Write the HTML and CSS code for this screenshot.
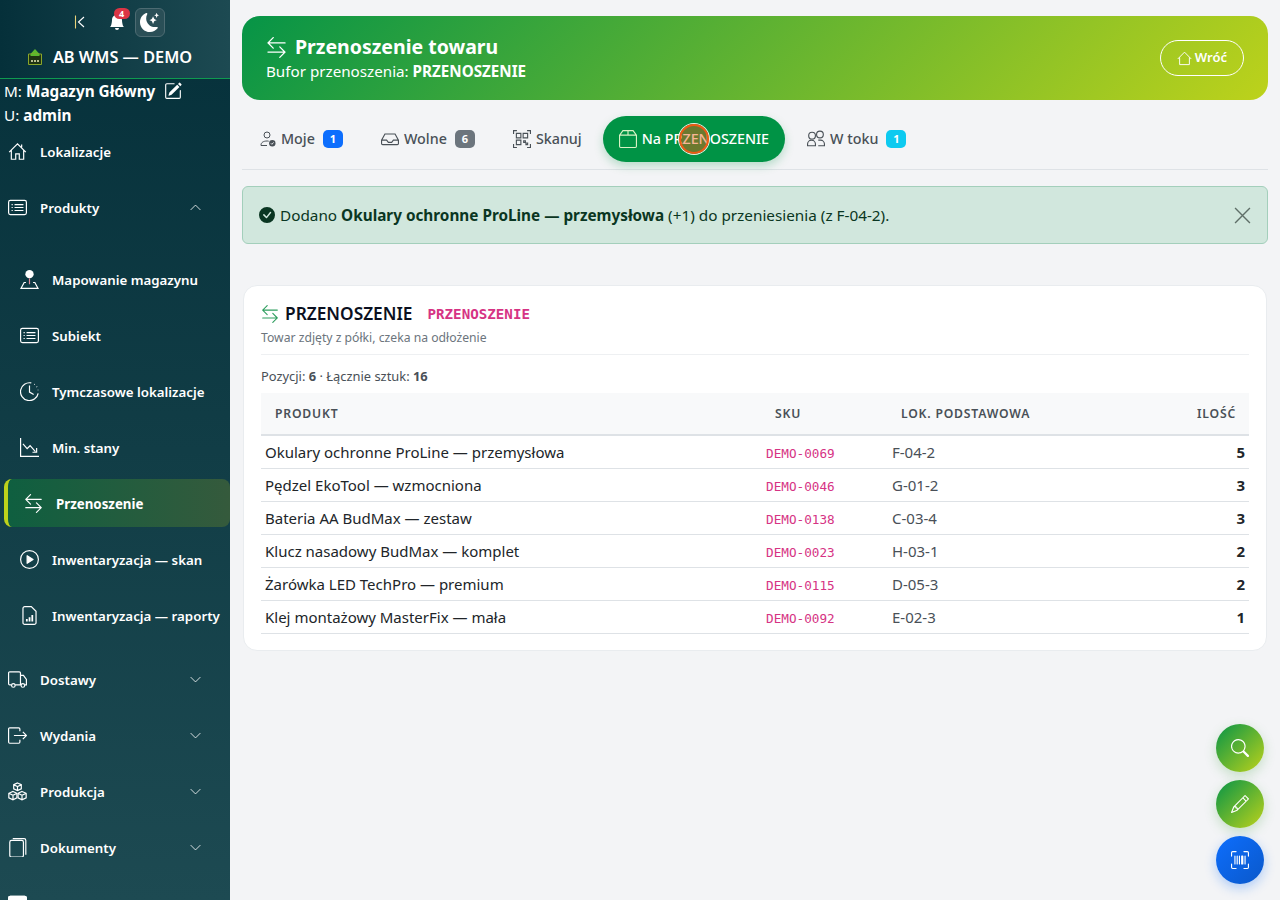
FILE: index.html
```html
<!DOCTYPE html>
<html lang="pl">
	<head>
		<meta charset="UTF-8" />
		<meta name="viewport" content="width=device-width, initial-scale=1.0" />
		<title>Przenoszenie towaru</title>
		<link rel="stylesheet" href="styles.css">
	</head>
	<body>
		<aside class="sidebar">
			<div class="brand">
				<div class="brand-tools">
					<svg class="tool-collapse" viewBox="0 0 16 16" fill="none" stroke="currentColor" stroke-width="1.1"><path d="M3.5 1.5v13" stroke="#e8d27a"/><path d="M12 3 6.5 8l5.5 5"/></svg>
					<span class="tool-bell">
						<svg viewBox="0 0 16 16" fill="currentColor"><path d="M8 16a2 2 0 0 0 2-2H6a2 2 0 0 0 2 2zm.995-14.901a1 1 0 1 0-1.99 0A5.002 5.002 0 0 0 3 6c0 1.098-.5 6-2 7h14c-1.5-1-2-5.902-2-7 0-2.42-1.72-4.44-4.005-4.901z"/></svg>
						<b class="bell-count">4</b>
					</span>
					<span class="tool-theme">
						<svg viewBox="0 0 16 16" fill="currentColor"><path d="M6 .278a.768.768 0 0 1 .08.858 7.208 7.208 0 0 0-.878 3.46c0 4.021 3.278 7.277 7.318 7.277.527 0 1.04-.055 1.533-.16a.787.787 0 0 1 .81.316.733.733 0 0 1-.031.893A8.349 8.349 0 0 1 8.344 16C3.734 16 0 12.286 0 7.71 0 4.266 2.114 1.312 5.124.06A.752.752 0 0 1 6 .278z"/><path d="M10.794 3.148a.217.217 0 0 1 .412 0l.387 1.162c.173.518.579.924 1.097 1.097l1.162.387a.217.217 0 0 1 0 .412l-1.162.387a1.734 1.734 0 0 0-1.097 1.097l-.387 1.162a.217.217 0 0 1-.412 0l-.387-1.162A1.734 1.734 0 0 0 9.31 6.593l-1.162-.387a.217.217 0 0 1 0-.412l1.162-.387a1.734 1.734 0 0 0 1.097-1.097l.387-1.162zM13.863.099a.145.145 0 0 1 .274 0l.258.774c.115.346.386.617.732.732l.774.258a.145.145 0 0 1 0 .274l-.774.258a1.156 1.156 0 0 0-.732.732l-.258.774a.145.145 0 0 1-.274 0l-.258-.774a1.156 1.156 0 0 0-.732-.732l-.774-.258a.145.145 0 0 1 0-.274l.774-.258c.346-.115.617-.386.732-.732L13.863.1z"/></svg>
					</span>
				</div>
				<div class="brand-name">
					<svg class="brand-logo" viewBox="0 0 16 16"><path d="M8 0 3.500 5h9z" fill="#5cb82e"/><path d="M1.500 5h13v10.500h-13z" fill="#1f3313" stroke="#8aa62a"/><path d="M3.500 5h9v2h-9z" fill="#5cb82e"/><path d="M4 11h2v2H4zM7 11h2v2H7zM10 11h2v2h-2z" fill="#b8bd90"/></svg>
					<span>AB WMS — DEMO</span>
				</div>
			</div>
			<div class="user-info">
				<div>M: <b>Magazyn Główny</b> <svg class="edit-icon" viewBox="0 0 16 16" fill="currentColor"><path d="M15.502 1.94a.5.5 0 0 1 0 .706L14.459 3.69l-2-2L13.502.646a.5.5 0 0 1 .707 0l1.293 1.293zm-1.75 2.456-2-2L4.939 9.21a.5.5 0 0 0-.121.196l-.805 2.414a.25.25 0 0 0 .316.316l2.414-.805a.5.5 0 0 0 .196-.12l6.813-6.814z"/><path fill-rule="evenodd" d="M1 13.500A1.500 1.500 0 0 0 2.500 15h11a1.500 1.500 0 0 0 1.500-1.500v-6a.5.5 0 0 0-1 0v6a.5.5 0 0 1-.5.5h-11a.5.5 0 0 1-.5-.5v-11a.5.5 0 0 1 .5-.5H9a.5.5 0 0 0 0-1H2.500A1.500 1.500 0 0 0 1 2.500v11z"/></svg></div>
				<div>U: <b>admin</b></div>
			</div>
			<nav class="nav">
				<a class="nav-item">
					<svg viewBox="0 0 16 16" fill="none" stroke="currentColor"><path d="M1 8.500 8 1.500l7 7M2.800 7v7.500h3.700V10h3v4.500h3.700V7M11.500 2v2.500"/></svg>
					<span>Lokalizacje</span>
				</a>
				<a class="nav-item">
					<svg viewBox="0 0 16 16" fill="none" stroke="currentColor"><rect x=".5" y="2" width="15" height="12" rx="1.500"/><path d="M5.500 5.500h7.500M5.500 8h7.500M5.500 10.500h7.500M3 5.500h1M3 8h1M3 10.500h1"/></svg>
					<span>Produkty</span>
					<svg class="chev" viewBox="0 0 16 16" fill="none" stroke="currentColor"><path d="m2 11 6-6 6 6"/></svg>
				</a>
				<div class="subnav">
					<a class="nav-item">
						<svg viewBox="0 0 16 16" fill="none" stroke="currentColor"><circle cx="8" cy="3.500" r="3.500" fill="currentColor" stroke="none"/><path d="M8 7v5" stroke="#e08a9a"/><path d="M5 10.500H3.500L.8 15.500h14.400l-2.700-5H11"/></svg>
						<span>Mapowanie magazynu</span>
					</a>
					<a class="nav-item">
						<svg viewBox="0 0 16 16" fill="none" stroke="currentColor"><rect x=".5" y="2" width="15" height="12" rx="1.500"/><path d="M5.500 5.500h7.500M5.500 8h7.500M5.500 10.500h7.500M3 5.500h1M3 8h1M3 10.500h1"/></svg>
						<span>Subiekt</span>
					</a>
					<a class="nav-item">
						<svg viewBox="0 0 16 16" fill="none" stroke="currentColor"><path d="M9.500.8A7.500 7.500 0 1 0 15.300 9.500"/><path d="M8 3v5.500l3.500 2"/><path d="M12 1.800l.5.300M14 3.800l.3.500M15.200 6.500v.5" stroke-dasharray="1 1"/></svg>
						<span>Tymczasowe lokalizacje</span>
					</a>
					<a class="nav-item">
						<svg viewBox="0 0 16 16" fill="none" stroke="currentColor"><path d="M.5 0v15.500H16"/><path d="m2.500 5 3.500 4 2.500-2.500 4.500 5"/><path d="M14 8.500v3.500h-3.500"/></svg>
						<span>Min. stany</span>
					</a>
					<a class="nav-item active">
						<svg viewBox="0 0 16 16" fill="currentColor"><use href="#swap"/></svg>
						<span>Przenoszenie</span>
					</a>
					<a class="nav-item">
						<svg viewBox="0 0 16 16" fill="none" stroke="currentColor"><circle cx="8" cy="8" r="7.500"/><path d="M6 4.800v6.400L11 8z" fill="currentColor" stroke-linejoin="round"/></svg>
						<span>Inwentaryzacja — skan</span>
					</a>
					<a class="nav-item">
						<svg viewBox="0 0 16 16" fill="none" stroke="currentColor"><path d="M9.500.5H4A1.500 1.500 0 0 0 2.500 2v12A1.500 1.500 0 0 0 4 15.500h8a1.500 1.500 0 0 0 1.500-1.500V4.500z"/><path d="M5 13v-2h1.500v2zM7.300 13V9.500h1.500V13zM9.600 13V7.500h1.500V13z" fill="currentColor" stroke="none"/></svg>
						<span>Inwentaryzacja — raporty</span>
					</a>
				</div>
				<a class="nav-item">
					<svg viewBox="0 0 16 16" fill="none" stroke="currentColor"><path d="M3 12.500H1.500a1 1 0 0 1-1-1v-9a1 1 0 0 1 1-1h8a1 1 0 0 1 1 1v10H6M10.500 4.500h2.500l2.500 3.500v4.500H14M10.500 12.500h.5"/><circle cx="4.500" cy="13" r="1.500"/><circle cx="12.500" cy="13" r="1.500"/></svg>
					<span>Dostawy</span>
					<svg class="chev" viewBox="0 0 16 16" fill="none" stroke="currentColor"><path d="m2 5 6 6 6-6"/></svg>
				</a>
				<a class="nav-item">
					<svg viewBox="0 0 16 16" fill="none" stroke="currentColor"><path d="M10 11.500v2a1 1 0 0 1-1 1H1.500a1 1 0 0 1-1-1v-11a1 1 0 0 1 1-1H9a1 1 0 0 1 1 1v2M5 8h10.500M12.500 5l3 3-3 3"/></svg>
					<span>Wydania</span>
					<svg class="chev" viewBox="0 0 16 16" fill="none" stroke="currentColor"><path d="m2 5 6 6 6-6"/></svg>
				</a>
				<a class="nav-item">
					<svg viewBox="0 0 16 16" fill="none" stroke="currentColor"><path d="M8 .8 11.200 2.300v3.400L8 7.200 4.800 5.700V2.300zM4.800 2.300 8 3.800l3.200-1.500M8 3.800v3.400"/><path d="M4.200 8 7.500 9.500v3.800L4.200 15 .7 13.300V9.500zM.7 9.500l3.500 1.700 3.300-1.700M4.200 11.200V15"/><path d="M11.800 8l3.500 1.500v3.800L11.800 15l-3.300-1.700V9.500zM8.500 9.500l3.300 1.700 3.500-1.700M11.800 11.200V15"/></svg>
					<span>Produkcja</span>
					<svg class="chev" viewBox="0 0 16 16" fill="none" stroke="currentColor"><path d="m2 5 6 6 6-6"/></svg>
				</a>
				<a class="nav-item">
					<svg viewBox="0 0 16 16" fill="none" stroke="currentColor"><rect x="1.500" y="2" width="11.500" height="14" rx="1.500"/><path d="M4 .5h9.500a1.500 1.500 0 0 1 1.500 1.500v12"/></svg>
					<span>Dokumenty</span>
					<svg class="chev" viewBox="0 0 16 16" fill="none" stroke="currentColor"><path d="m2 5 6 6 6-6"/></svg>
				</a>
				<a class="nav-item">
					<svg viewBox="0 0 16 16" fill="none" stroke="currentColor"><rect x=".5" y="2" width="15" height="13.500" rx="1.500"/><path d="M.5 3.500a1.500 1.500 0 0 1 1.500-1.500h12a1.500 1.500 0 0 1 1.500 1.500V5H.5z" fill="currentColor"/></svg>
					<span>Harmonogram</span>
				</a>
			</nav>
		</aside>

		<main class="main">
			<svg class="sprite" xmlns="http://www.w3.org/2000/svg"><symbol id="swap" viewBox="0 0 16 16"><path fill-rule="evenodd" d="M1 11.500a.5.5 0 0 0 .5.5h11.793l-3.147 3.146a.5.5 0 0 0 .708.708l4-4a.5.5 0 0 0 0-.708l-4-4a.5.5 0 0 0-.708.708L13.293 11H1.500a.5.5 0 0 0-.5.5zm14-7a.5.5 0 0 1-.5.5H2.707l3.147 3.146a.5.5 0 1 1-.708.708l-4-4a.5.5 0 0 1 0-.708l4-4a.5.5 0 1 1 .708.708L2.707 4H14.500a.5.5 0 0 1 .5.5z"/></symbol></svg>

			<header class="hero">
				<div class="hero-text">
					<h1><svg viewBox="0 0 16 16" fill="currentColor"><use href="#swap"/></svg>Przenoszenie towaru</h1>
					<p>Bufor przenoszenia: <b>PRZENOSZENIE</b></p>
				</div>
				<a class="btn-back">
					<svg viewBox="0 0 16 16" fill="none" stroke="currentColor"><path d="M.8 8.500 8 1.200l7.200 7.300M2.800 6.800v7.700h10.400V6.800"/></svg>
					Wróć
				</a>
			</header>

			<div class="tabs">
				<a class="tab">
					<svg viewBox="0 0 16 16" fill="none" stroke="currentColor"><circle cx="7" cy="4" r="3"/><path d="M1 14.500v-.5c0-2.500 2.500-4 6-4 .6 0 1.200 0 1.700.2M1 14.500h6"/><circle cx="12.300" cy="12.300" r="3.200" fill="currentColor" stroke="none"/><path d="m10.900 12.300 1 1 1.700-1.900" stroke="#f3f4f6" stroke-width=".9"/></svg>
					Moje <span class="count count-blue">1</span>
				</a>
				<a class="tab">
					<svg class="icon-wide" viewBox="0 0 16 16" fill="none" stroke="currentColor"><path d="M3.500 3.500h9L15.500 9v3a1 1 0 0 1-1 1h-13a1 1 0 0 1-1-1V9zM.5 9h4.500l1.500 2h3L11 9h4.500"/></svg>
					Wolne <span class="count count-grey">6</span>
				</a>
				<a class="tab">
					<svg class="icon-wide" viewBox="0 0 16 16" fill="none" stroke="currentColor"><path d="M.5 3.500v-3h3M12.500.5h3v3M15.500 12.500v3h-3M3.500 15.500h-3v-3"/><path d="M3 3h4v4H3zM9 3h4v4H9zM3 9h4v4H3zM9.500 9.500h1.500v1.500h-1.500zM11.500 11.500h1.500V13h-1.500z"/></svg>
					Skanuj
				</a>
				<a class="tab tab-active">
					<svg class="icon-wide" viewBox="0 0 16 16" fill="none" stroke="#d9f2c4"><path d="M3.500.5h9L15.500 4.500v10a1 1 0 0 1-1 1h-13a1 1 0 0 1-1-1v-10zM.5 4.500h15M8 .5v4"/></svg>
					Na PRZENOSZENIE
					<span class="touch-dot"></span>
				</a>
				<a class="tab">
					<svg class="icon-wide" viewBox="0 0 16 16" fill="none" stroke="currentColor"><circle cx="4.500" cy="5" r="3"/><circle cx="11.500" cy="4" r="3"/><path d="M.5 14v-1.500a3.500 3.500 0 0 1 7 0V14zM10 9h2a3.500 3.500 0 0 1 3.500 3.500V14H10"/></svg>
					W toku <span class="count count-cyan">1</span>
				</a>
			</div>

			<div class="alert">
				<svg class="alert-ok" viewBox="0 0 16 16" fill="currentColor"><path d="M16 8A8 8 0 1 1 0 8a8 8 0 0 1 16 0zm-3.970-3.030a.75.75 0 0 0-1.080.022L7.477 9.417 5.384 7.323a.75.75 0 0 0-1.060 1.060L6.970 11.030a.75.75 0 0 0 1.079-.020l3.992-4.990a.75.75 0 0 0-.010-1.050z"/></svg>
				<span>Dodano <b>Okulary ochronne ProLine — przemysłowa</b> (+1) do przeniesienia (z F-04-2).</span>
				<svg class="alert-close" viewBox="0 0 16 16" fill="none" stroke="currentColor" stroke-width="1.300"><path d="m1 1 14 14M15 1 1 15"/></svg>
			</div>

			<section class="card">
				<div class="card-head">
					<h2><svg viewBox="0 0 16 16" fill="#2f9e5f"><use href="#swap"/></svg>PRZENOSZENIE <code>PRZENOSZENIE</code></h2>
					<p>Towar zdjęty z półki, czeka na odłożenie</p>
				</div>
				<p class="totals">Pozycji: <b>6</b> · Łącznie sztuk: <b>16</b></p>
				<table class="items">
					<thead>
						<tr>
							<th class="col-name">Produkt</th>
							<th class="col-sku">SKU</th>
							<th class="col-loc">Lok. podstawowa</th>
							<th class="col-qty">Ilość</th>
						</tr>
					</thead>
					<tbody>
						<tr><td>Okulary ochronne ProLine — przemysłowa</td><td><code>DEMO-0069</code></td><td class="loc">F-04-2</td><td class="qty">5</td></tr>
						<tr><td>Pędzel EkoTool — wzmocniona</td><td><code>DEMO-0046</code></td><td class="loc">G-01-2</td><td class="qty">3</td></tr>
						<tr><td>Bateria AA BudMax — zestaw</td><td><code>DEMO-0138</code></td><td class="loc">C-03-4</td><td class="qty">3</td></tr>
						<tr><td>Klucz nasadowy BudMax — komplet</td><td><code>DEMO-0023</code></td><td class="loc">H-03-1</td><td class="qty">2</td></tr>
						<tr><td>Żarówka LED TechPro — premium</td><td><code>DEMO-0115</code></td><td class="loc">D-05-3</td><td class="qty">2</td></tr>
						<tr><td>Klej montażowy MasterFix — mała</td><td><code>DEMO-0092</code></td><td class="loc">E-02-3</td><td class="qty">1</td></tr>
					</tbody>
				</table>
			</section>

			<div class="fabs">
				<a class="fab">
					<svg viewBox="0 0 16 16" fill="currentColor"><path d="M11.742 10.344a6.500 6.500 0 1 0-1.397 1.398h-.001c.03.040.062.078.098.115l3.850 3.850a1 1 0 0 0 1.415-1.414l-3.850-3.850a1.007 1.007 0 0 0-.115-.100zM12 6.500a5.500 5.500 0 1 1-11 0 5.500 5.500 0 0 1 11 0z"/></svg>
				</a>
				<a class="fab">
					<svg viewBox="0 0 16 16" fill="currentColor"><path d="M12.146.146a.5.5 0 0 1 .708 0l3 3a.5.5 0 0 1 0 .708l-10 10a.5.5 0 0 1-.168.110l-5 2a.5.5 0 0 1-.650-.650l2-5a.5.5 0 0 1 .110-.168l10-10zM11.207 2.500 13.500 4.793 14.793 3.500 12.500 1.207 11.207 2.500zm1.586 3L10.500 3.207 4 9.707V10h.5a.5.5 0 0 1 .5.5v.5h.5a.5.5 0 0 1 .5.5v.5h.293l6.500-6.500zm-9.761 5.175-.106.106-1.528 3.821 3.821-1.528.106-.106A.5.5 0 0 1 5 12.500V12h-.5a.5.5 0 0 1-.5-.5V11h-.5a.5.5 0 0 1-.468-.325z"/></svg>
				</a>
				<a class="fab fab-blue">
					<svg viewBox="0 0 16 16" fill="currentColor"><path d="M1.500 1a.5.5 0 0 0-.5.5v3a.5.5 0 0 1-1 0v-3A1.500 1.500 0 0 1 1.500 0h3a.5.5 0 0 1 0 1h-3zM11 .5a.5.5 0 0 1 .5-.5h3A1.500 1.500 0 0 1 16 1.500v3a.5.5 0 0 1-1 0v-3a.5.5 0 0 0-.5-.5h-3a.5.5 0 0 1-.5-.5zM.5 11a.5.5 0 0 1 .5.5v3a.5.5 0 0 0 .5.5h3a.5.5 0 0 1 0 1h-3A1.500 1.500 0 0 1 0 14.500v-3a.5.5 0 0 1 .5-.5zm15 0a.5.5 0 0 1 .5.5v3a1.500 1.500 0 0 1-1.500 1.500h-3a.5.5 0 0 1 0-1h3a.5.5 0 0 0 .5-.5v-3a.5.5 0 0 1 .5-.5zM3 4.500a.5.5 0 0 1 1 0v7a.5.5 0 0 1-1 0v-7zm2 0a.5.5 0 0 1 1 0v7a.5.5 0 0 1-1 0v-7zm2 0a.5.5 0 0 1 1 0v7a.5.5 0 0 1-1 0v-7zm2 0a.5.5 0 0 1 .5-.5h1a.5.5 0 0 1 .5.5v7a.5.5 0 0 1-.5.5h-1a.5.5 0 0 1-.5-.5v-7zm3 0a.5.5 0 0 1 1 0v7a.5.5 0 0 1-1 0v-7z"/></svg>
				</a>
			</div>
		</main>
	</body>
</html>
```

FILE: styles.css
```css
* {
	margin: 0;
	padding: 0;
	box-sizing: border-box;
}

body {
	display: flex;
	height: 100vh;
	overflow: hidden;
	background-color: #f3f4f6;
	color: #212529;
	font: 14px/1.5 "Noto Sans", "Open Sans", sans-serif;
}

a {
	color: inherit;
	text-decoration: none;
}

code {
	font-family: "DejaVu Sans Mono", "Liberation Mono", monospace;
	color: #d63384;
}

.sprite {
	display: none;
}

/* sidebar */
.sidebar {
	flex: 0 0 230px;
	height: 100vh;
	overflow: hidden;
	color: #fff;
	background: linear-gradient(180deg, #05303a 0%, #1d4a52 100%);
}

.brand {
	height: 79px;
	padding-top: 7px;
	border-bottom: 1px solid #0f9a50;
	background: linear-gradient(90deg, #05303a 0%, #1d4a52 100%);
}

.brand-tools {
	display: flex;
	align-items: center;
	justify-content: center;
	gap: 16px;
	height: 30px;
	padding-left: 6px;
}

.tool-collapse {
	width: 16px;
	height: 16px;
	margin-right: 5px;
}

.tool-bell {
	position: relative;
	display: flex;
}

.tool-bell svg {
	width: 16px;
	height: 16px;
}

.bell-count {
	position: absolute;
	top: -6px;
	left: 5px;
	min-width: 16px;
	height: 11px;
	border-radius: 6px;
	background-color: #dc3545;
	font-size: 9px;
	line-height: 11px;
	text-align: center;
}

.tool-theme {
	display: flex;
	align-items: center;
	justify-content: center;
	width: 30px;
	height: 29px;
	margin-left: -6px;
	border: 1px solid #4d6b72;
	border-radius: 6px;
	background-color: #2a4f57;
}

.tool-theme svg {
	width: 19px;
	height: 19px;
}

.brand-name {
	display: flex;
	align-items: center;
	justify-content: center;
	gap: 10px;
	margin-top: 8px;
	padding-right: 11px;
	font-size: 16.300px;
	font-weight: 600;
}

.brand-logo {
	width: 16px;
	height: 16px;
}

.user-info {
	padding: 0 4px;
	font-size: 15.300px;
	line-height: 24px;
}

.user-info div {
	height: 24px;
}

.edit-icon {
	width: 18px;
	height: 18px;
	margin-left: 5px;
	vertical-align: -3px;
}

.nav-item {
	display: flex;
	align-items: center;
	height: 48px;
	margin-bottom: 8px;
	padding-left: 8px;
	font-size: 13.300px;
	font-weight: 600;
}

.nav-item span {
	padding-top: 4px;
}

.nav-item > svg:first-child {
	flex: none;
	width: 19px;
	height: 19px;
	margin-right: 13px;
}

.nav-item .chev {
	width: 13px;
	height: 13px;
	margin-left: auto;
	margin-right: 28px;
}

.subnav {
	padding: 16px 0 8px;
}

.subnav .nav-item {
	padding-left: 20px;
}

.subnav .nav-item.active {
	margin-left: 4px;
	padding-left: 16px;
	border-left: 4px solid #bdd21b;
	border-radius: 8px;
	background: linear-gradient(90deg, #0f5f40 0%, #355a3c 100%);
	font-weight: 700;
}

/* main area */
.main {
	flex: 1;
	padding: 16px 12px;
	overflow: hidden;
}

.hero {
	display: flex;
	align-items: center;
	justify-content: space-between;
	height: 84px;
	padding: 0 24px;
	border-radius: 18px;
	color: #fff;
	background: linear-gradient(135deg, #069447 0%, #bdd21b 100%);
}

.hero-text {
	margin-top: -2px;
}

.hero h1 {
	display: flex;
	align-items: center;
	gap: 8px;
	font-size: 19.500px;
	font-weight: 700;
	line-height: 28px;
}

.hero h1 svg {
	width: 21px;
	height: 21px;
}

.hero p {
	font-size: 15.200px;
	line-height: 20px;
}

.btn-back {
	display: flex;
	align-items: center;
	gap: 3px;
	height: 36px;
	padding: 0 16px;
	border: 1px solid #fff;
	border-radius: 18px;
	font-size: 13px;
	font-weight: 600;
}

.btn-back svg {
	width: 15px;
	height: 15px;
}

.tabs {
	display: flex;
	align-items: center;
	gap: 6px;
	height: 54px;
	margin-top: 16px;
	padding: 0 0 8px 2px;
	border-bottom: 1px solid #dee2e6;
}

.tab {
	position: relative;
	display: flex;
	align-items: center;
	gap: 5px;
	height: 46px;
	padding: 0 16px;
	color: #495057;
	font-size: 14.300px;
	font-weight: 500;
	line-height: 48px;
}

.tab svg {
	width: 16px;
	height: 16px;
}

.tab .icon-wide {
	width: 18px;
	height: 18px;
}

.tab-active {
	margin-left: -1px;
	border-radius: 23px;
	color: #fff;
	background-color: #009345;
	box-shadow: 0 4px 10px rgba(0, 147, 69, 0.25);
}

.touch-dot {
	position: absolute;
	top: 8px;
	left: 76px;
	width: 30px;
	height: 30px;
	border: 2px solid #f05a14;
	border-radius: 50%;
	background-color: rgba(240, 90, 20, 0.45);
	box-shadow: 0 0 0 1px #e8efe4;
}

.count {
	display: inline-block;
	min-width: 20px;
	height: 18px;
	margin-left: 3px;
	border-radius: 5px;
	color: #fff;
	font-size: 11px;
	font-weight: 700;
	line-height: 18px;
	text-align: center;
}

.count-blue {
	background-color: #0d6efd;
}

.count-grey {
	background-color: #6c757d;
}

.count-cyan {
	background-color: #0dcaf0;
}

.alert {
	display: flex;
	align-items: center;
	height: 58px;
	margin-top: 16px;
	padding: 0 16px;
	border: 1px solid #a3cfbb;
	border-radius: 6px;
	color: #0a3622;
	background-color: #d1e7dd;
	font-size: 15.300px;
}

.alert-ok {
	width: 16px;
	height: 16px;
	margin-right: 5px;
}

.alert-close {
	width: 17px;
	height: 17px;
	margin-left: auto;
	color: #5f6f68;
}

.card {
	margin: 41px 1px 0;
	padding: 17px 17px 16px;
	border: 1px solid #e9ecef;
	border-radius: 14px;
	background-color: #fff;
}

.card-head {
	padding-bottom: 8px;
	border-bottom: 1px solid #eef0f2;
}

.card-head h2 {
	display: flex;
	align-items: center;
	margin-top: 1px;
	color: #0b1020;
	font-size: 17.300px;
	font-weight: 600;
	line-height: 20px;
}

.card-head h2 svg {
	width: 18px;
	height: 18px;
	margin-right: 6px;
}

.card-head h2 code {
	margin-left: 15px;
	font-size: 14.200px;
	font-weight: 700;
}

.card-head p {
	margin-top: 6px;
	color: #6c757d;
	font-size: 12.200px;
	line-height: 16px;
}

.totals {
	margin-top: 11px;
	color: #495057;
	font-size: 12.900px;
	line-height: 20px;
}

.items {
	width: 100%;
	margin-top: 7px;
	border-collapse: collapse;
	table-layout: fixed;
}

.items th {
	height: 42px;
	padding: 1px 14px 0;
	border-bottom: 2px solid #dee2e6;
	color: #495057;
	background-color: #f8f9fa;
	font-size: 12.200px;
	font-weight: 600;
	letter-spacing: 0.8px;
	text-align: left;
	text-transform: uppercase;
}

.col-name {
	width: 500px;
}

.col-sku {
	width: 126px;
}

.col-loc {
	width: 250px;
}

.items .col-qty {
	padding-right: 13px;
	text-align: right;
}

.items td {
	height: 33px;
	padding: 1px 4px 0;
	border-bottom: 1px solid #dee2e6;
	font-size: 15px;
}

.items td code {
	margin-left: 1px;
	font-size: 12.700px;
}

.items .loc {
	padding-left: 5px;
	color: #495057;
}

.items .qty {
	font-weight: 700;
	text-align: right;
}

/* floating buttons */
.fabs {
	position: fixed;
	right: 16px;
	bottom: 16px;
	display: flex;
	flex-direction: column;
	gap: 8px;
}

.fab {
	display: flex;
	align-items: center;
	justify-content: center;
	width: 48px;
	height: 48px;
	border-radius: 50%;
	color: #fff;
	background: linear-gradient(135deg, #069447 0%, #bdd21b 100%);
	box-shadow: 0 4px 12px rgba(60, 160, 60, 0.25);
}

.fab svg {
	width: 18px;
	height: 18px;
}

.fab-blue {
	background: linear-gradient(135deg, #0d6efd 0%, #0a58ca 100%);
	box-shadow: 0 4px 12px rgba(13, 110, 253, 0.3);
}
```
